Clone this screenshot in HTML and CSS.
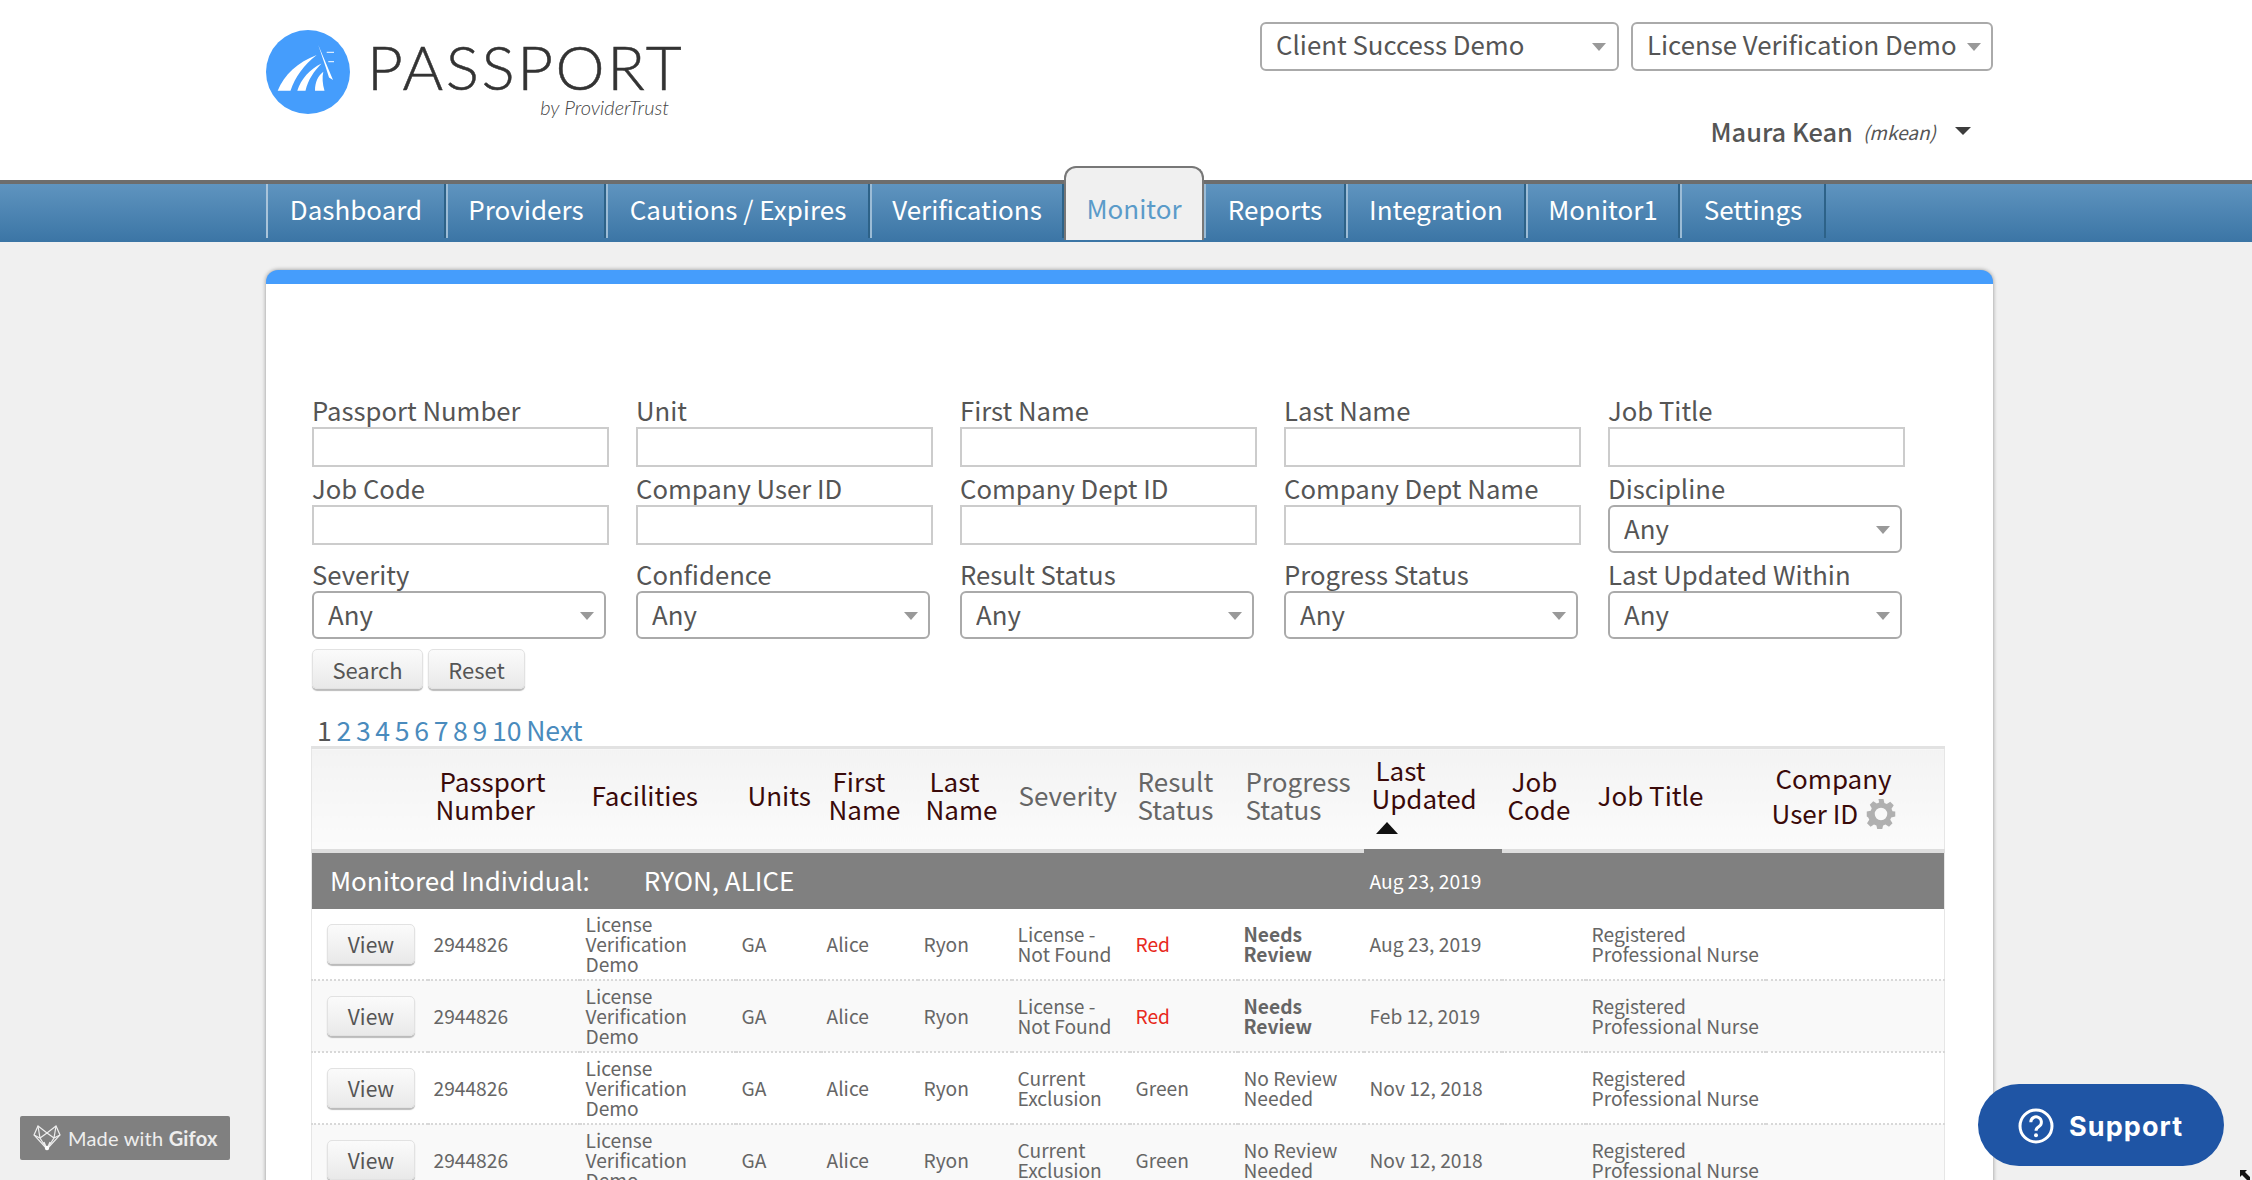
FILE: index.html
```html
<!DOCTYPE html>
<html lang="en">
<head>
    <meta charset="UTF-8">
    <title>Passport - Monitor</title>
    <link rel="stylesheet" href="styles.css">
</head>
<body>

<header class="top-header">
    <div class="logo">
        <svg class="logo-mark" viewBox="0 0 84 84" width="84" height="84">
            <circle cx="42" cy="42" r="42" fill="#459dfc"/>
            <path d="M11.7 60.7C18 45 32 32 50.7 25C38 35 29 47 24.5 60.7Z" fill="#fff"/>
            <path d="M31.3 60.7C35 49 44 39 55.5 33.5C48 41 42 50 39.5 60.7Z" fill="#fff"/>
            <path d="M49 60.7C49 52 52 46 57.3 41.7C56 47 56.5 54 58.5 60.7Z" fill="#fff"/>
            <path d="M52.3 15L67 50L63 47.5L60 38Z" fill="#fff"/>
            <path d="M60.7 22.3H68M62.3 31.7H68" stroke="#fff" stroke-width="1"/>
        </svg>
        <div class="logo-text">
            <span class="logo-name">PASSPORT</span>
            <span class="logo-sub">by ProviderTrust</span>
        </div>
    </div>
    <div class="header-right">
        <div class="org-selects">
            <div class="select org-select org-first"><select><option>Client Success Demo</option></select></div>
            <div class="select org-select org-second"><select><option>License Verification Demo</option></select></div>
        </div>
        <div class="user-menu">
            <span class="user-name">Maura Kean</span>
            <span class="user-login">(mkean)</span>
            <span class="user-caret"></span>
        </div>
    </div>
</header>

<nav class="main-nav">
    <a class="nav-item">Dashboard</a>
    <a class="nav-item">Providers</a>
    <a class="nav-item">Cautions / Expires</a>
    <a class="nav-item">Verifications</a>
    <a class="nav-item active">Monitor</a>
    <a class="nav-item">Reports</a>
    <a class="nav-item">Integration</a>
    <a class="nav-item">Monitor1</a>
    <a class="nav-item">Settings</a>
</nav>

<main class="panel">
    <form class="search-form">
        <div class="field"><label>Passport Number</label><input type="text"></div>
        <div class="field"><label>Unit</label><input type="text"></div>
        <div class="field"><label>First Name</label><input type="text"></div>
        <div class="field"><label>Last Name</label><input type="text"></div>
        <div class="field"><label>Job Title</label><input type="text"></div>

        <div class="field"><label>Job Code</label><input type="text"></div>
        <div class="field"><label>Company User ID</label><input type="text"></div>
        <div class="field"><label>Company Dept ID</label><input type="text"></div>
        <div class="field"><label>Company Dept Name</label><input type="text"></div>
        <div class="field"><label>Discipline</label><div class="select"><select><option>Any</option></select></div></div>

        <div class="field"><label>Severity</label><div class="select"><select><option>Any</option></select></div></div>
        <div class="field"><label>Confidence</label><div class="select"><select><option>Any</option></select></div></div>
        <div class="field"><label>Result Status</label><div class="select"><select><option>Any</option></select></div></div>
        <div class="field"><label>Progress Status</label><div class="select"><select><option>Any</option></select></div></div>
        <div class="field"><label>Last Updated Within</label><div class="select"><select><option>Any</option></select></div></div>
    </form>

    <div class="form-buttons">
        <button class="btn btn-search">Search</button>
        <button class="btn btn-reset">Reset</button>
    </div>

    <div class="pager">
        <span>1</span>
        <a>2</a> <a>3</a> <a>4</a> <a>5</a> <a>6</a> <a>7</a> <a>8</a> <a>9</a> <a>10</a> <a>Next</a>
    </div>

    <table class="results">
        <colgroup>
            <col class="c1"><col class="c2"><col class="c3"><col class="c4"><col class="c5"><col class="c6"><col class="c7">
            <col class="c8"><col class="c9"><col class="c10"><col class="c11"><col class="c12"><col class="c13">
        </colgroup>
        <thead>
            <tr>
                <th></th>
                <th><span class="first-line">Passport</span>Number</th>
                <th class="single">Facilities</th>
                <th class="single">Units</th>
                <th><span class="first-line">First</span>Name</th>
                <th><span class="first-line">Last</span>Name</th>
                <th class="plain tight">Severity</th>
                <th class="plain">Result<br>Status</th>
                <th class="plain">Progress<br>Status</th>
                <th class="sorted"><span class="first-line">Last</span>Updated<span class="sort-arrow"></span></th>
                <th class="job-code"><span class="first-line">Job</span>Code</th>
                <th class="single">Job Title</th>
                <th class="company"><span class="first-line">Company</span>User ID
                    <svg class="gear" viewBox="0 0 24 24" width="30" height="30">
                        <path fill="#b0b0b0" fill-rule="evenodd" d="M10 1h4l.7 3.2 1.9.8 2.8-1.8 2.8 2.8-1.8 2.8.8 1.9L23.4 11v4l-3.2.7-.8 1.9 1.8 2.8-2.8 2.8-2.8-1.8-1.9.8-.7 2.8h-4l-.7-2.8-1.9-.8-2.8 1.8-2.8-2.8 1.8-2.8-.8-1.9L.6 15v-4l3.2-.7.8-1.9L3 5.6 5.8 2.8l2.8 1.8 1.9-.8ZM12 8a5 5 0 1 0 0 10 5 5 0 0 0 0-10Z" transform="translate(0 -1)"/>
                    </svg>
                </th>
            </tr>
        </thead>
        <tbody>
            <tr class="group-row">
                <td colspan="9"><span class="group-label">Monitored Individual:</span><span class="group-name">RYON, ALICE</span></td>
                <td>Aug 23, 2019</td>
                <td colspan="3"></td>
            </tr>
            <tr>
                <td class="view-cell"><button class="btn btn-view">View</button></td>
                <td>2944826</td>
                <td>License Verification Demo</td>
                <td>GA</td>
                <td>Alice</td>
                <td>Ryon</td>
                <td>License - Not Found</td>
                <td class="red">Red</td>
                <td class="needs">Needs Review</td>
                <td>Aug 23, 2019</td>
                <td></td>
                <td class="job-title">Registered Professional Nurse</td>
                <td></td>
            </tr>
            <tr>
                <td class="view-cell"><button class="btn btn-view">View</button></td>
                <td>2944826</td>
                <td>License Verification Demo</td>
                <td>GA</td>
                <td>Alice</td>
                <td>Ryon</td>
                <td>License - Not Found</td>
                <td class="red">Red</td>
                <td class="needs">Needs Review</td>
                <td>Feb 12, 2019</td>
                <td></td>
                <td class="job-title">Registered Professional Nurse</td>
                <td></td>
            </tr>
            <tr>
                <td class="view-cell"><button class="btn btn-view">View</button></td>
                <td>2944826</td>
                <td>License Verification Demo</td>
                <td>GA</td>
                <td>Alice</td>
                <td>Ryon</td>
                <td>Current Exclusion</td>
                <td>Green</td>
                <td>No Review Needed</td>
                <td>Nov 12, 2018</td>
                <td></td>
                <td class="job-title">Registered Professional Nurse</td>
                <td></td>
            </tr>
            <tr>
                <td class="view-cell"><button class="btn btn-view">View</button></td>
                <td>2944826</td>
                <td>License Verification Demo</td>
                <td>GA</td>
                <td>Alice</td>
                <td>Ryon</td>
                <td>Current Exclusion</td>
                <td>Green</td>
                <td>No Review Needed</td>
                <td>Nov 12, 2018</td>
                <td></td>
                <td class="job-title">Registered Professional Nurse</td>
                <td></td>
            </tr>
        </tbody>
    </table>
</main>

<div class="gifox-badge">
    <svg viewBox="0 0 30 28" width="30" height="28" fill="none" stroke="#eee" stroke-width="1.2">
        <path d="M2 11L6 2L15 9L24 2L28 11L15 25Z"/>
        <path d="M6 2L8 14L15 25L22 14L24 2M2 11L8 14L15 9L22 14L28 11M12 18L15 25L18 18"/>
        <circle cx="15" cy="24" r="2.2" fill="#fff" stroke="none"/>
    </svg>
    <span>Made with <b>Gifox</b></span>
</div>

<a class="support-btn">
    <svg viewBox="0 0 36 36" width="36" height="36" fill="none">
        <circle cx="18" cy="18" r="16" stroke="#fff" stroke-width="3"/>
        <path d="M12.8 14.2a5.3 5.3 0 1 1 8.2 4.4c-1.9 1.2-3 2-3 4.2" stroke="#fff" stroke-width="3"/>
        <circle cx="18" cy="27.2" r="2" fill="#fff"/>
    </svg>
    <span>Support</span>
</a>

<svg class="cursor-mark" viewBox="0 0 12 10" width="12" height="10">
    <path d="M0 0H7L5 2L10 7V10H7L2 5L0 7Z" fill="#111"/>
</svg>

</body>
</html>
```

FILE: styles.css
```css
html, body {
    height: 1180px;
    overflow: hidden;
}

body {
    margin: 0;
    background-color: #f0f0f0;
    font-family: "Noto Sans CJK SC", "Noto Sans", sans-serif;
    color: #555;
}

.top-header {
    display: flex;
    justify-content: space-between;
    height: 180px;
    padding: 0 259px 0 266px;
    background-color: #fff;
}

.logo {
    display: flex;
    gap: 17px;
    padding-top: 30px;
    height: 84px;
}

.logo-text {
    display: flex;
    flex-direction: column;
    align-items: flex-end;
}

.logo-name {
    font-family: "Lato", sans-serif;
    font-weight: 300;
    font-size: 62px;
    line-height: 62px;
    letter-spacing: 2.6px;
    color: #333;
    margin-top: 5px;
    -webkit-text-stroke: 0.5px #333;
}

.logo-sub {
    font-family: "Lato", sans-serif;
    font-weight: 300;
    font-style: italic;
    font-size: 20px;
    line-height: 20px;
    color: #444;
    padding-right: 15px;
}

.header-right {
    display: flex;
    flex-direction: column;
    align-items: flex-end;
    padding-top: 22px;
}

.org-selects {
    display: flex;
    gap: 12px;
}

.select {
    position: relative;
    width: 294px;
    height: 48px;
}

.select::after {
    content: "";
    position: absolute;
    right: 12px;
    top: 21px;
    border-left: 7px solid transparent;
    border-right: 7px solid transparent;
    border-top: 8px solid #999;
}

.select select {
    appearance: none;
    width: 100%;
    height: 100%;
    padding: 0 0 4px 14px;
    border: 2px solid #aaa;
    border-radius: 6px;
    background-color: #fff;
    font-family: inherit;
    font-size: 25.8px;
    color: #555;
}

.org-select {
    height: 49px;
}

.org-select select {
    padding-bottom: 7px;
}

.org-first {
    width: 359px;
}

.org-first::after {
    right: 13px;
}

.org-second {
    width: 362px;
}

.user-menu {
    display: flex;
    align-items: center;
    height: 30px;
    margin-top: 45px;
    padding-right: 22px;
}

.user-name {
    font-size: 25.4px;
    font-weight: 500;
    color: #555;
}

.user-login {
    font-size: 19px;
    font-style: italic;
    margin-left: 10px;
}

.user-caret {
    margin-left: 19px;
    border-left: 8px solid transparent;
    border-right: 8px solid transparent;
    border-top: 8px solid #3d3d3d;
}

.main-nav {
    display: flex;
    box-sizing: border-box;
    height: 62px;
    padding: 0 0 4px 266px;
    border-top: 4px solid #6d6d6d;
    background: linear-gradient(#5f94bf, #3b75a5);
}

.nav-item {
    display: flex;
    align-items: center;
    justify-content: center;
    box-sizing: border-box;
    padding-bottom: 6px;
    border-left: 2px solid #9cbcd6;
    border-right: 2px solid #2d6288;
    font-size: 26px;
    color: #fff;
}

.nav-item:nth-child(1) { width: 180px; border-left-color: #a9c4da; }
.nav-item:nth-child(2) { width: 160px; }
.nav-item:nth-child(3) { width: 264px; }
.nav-item:nth-child(4) { width: 194px; }
.nav-item:nth-child(6) { width: 142px; }
.nav-item:nth-child(7) { width: 180px; }
.nav-item:nth-child(8) { width: 154px; }
.nav-item:nth-child(9) { width: 146px; }

.nav-item.active {
    width: 140px;
    height: 74px;
    margin-top: -18px;
    padding-bottom: 0;
    padding-top: 6px;
    border: 2px solid #777;
    border-bottom: none;
    border-radius: 12px 12px 0 0;
    background-color: #f0f0f0;
    color: #5b9bc9;
}

.panel {
    width: 1633px;
    margin: 28px 0 0 266px;
    padding: 114px 48px 0 46px;
    height: 900px;
    border-top: 14px solid #459dfc;
    border-radius: 12px 12px 0 0;
    background-color: #fff;
    box-shadow: 0 0 4px rgba(0, 0, 0, 0.4);
}

.search-form {
    display: grid;
    grid-template-columns: repeat(5, 324px);
    row-gap: 9px;
    align-items: start;
}

.field label {
    display: block;
    height: 29px;
    font-size: 25.7px;
    line-height: 23px;
    color: #555;
}

.field input {
    display: block;
    box-sizing: border-box;
    width: 297px;
    height: 40px;
    border: 2px solid #ccc;
    background-color: #fff;
}

.form-buttons {
    display: flex;
    gap: 5px;
    margin-top: 10px;
}

.btn {
    height: 40px;
    border: 1px solid #e2e2e2;
    border-radius: 5px;
    background: linear-gradient(#fbfbfb, #e9e9e9);
    box-shadow: 0 2px 1px #bbb;
    font-family: inherit;
    font-size: 22px;
    color: #555;
    padding: 0;
}

.btn-search {
    width: 111px;
}

.btn-reset {
    width: 97px;
}

.pager {
    margin-top: 26px;
    height: 30px;
    padding-left: 5px;
    font-size: 26.6px;
    line-height: 30px;
    word-spacing: -1.3px;
}

.pager a {
    color: #4a8bbd;
}

.results {
    table-layout: fixed;
    width: 1633px;
    border-collapse: collapse;
    margin: 1px 0 0 -1px;
    border-right: 1px solid #e6e6e6;
    border-left: 1px solid #e6e6e6;
}

.c1 { width: 116px; }
.c2 { width: 152px; }
.c3 { width: 156px; }
.c4 { width: 85px; }
.c5 { width: 97px; }
.c6 { width: 94px; }
.c7 { width: 118px; }
.c8 { width: 108px; }
.c9 { width: 126px; }
.c10 { width: 138px; }
.c11 { width: 84px; }
.c12 { width: 180px; }
.c13 { width: 179px; }

.results th {
    height: 91px;
    padding: 0 0 9px 8px;
    border-top: 3px solid #e2e2e2;
    border-bottom: 4px solid #dedede;
    background: linear-gradient(#f3f3f3, #fbfbfb);
    font-size: 26px;
    font-weight: 400;
    line-height: 28px;
    text-align: left;
    color: #3a0a0a;
}

.results th.single {
    padding-left: 12px;
}

.results th.plain {
    color: #666;
}

.results th.tight {
    padding-left: 7px;
}

.results th.job-code {
    padding-left: 6px;
}

.results th.sorted {
    border-bottom-color: #808080;
}

.results th.company {
    padding-left: 6px;
    line-height: 35px;
}

.first-line {
    display: block;
    margin-left: 4px;
}

.sort-arrow {
    display: block;
    width: 0;
    height: 0;
    margin: 10px 0 0 4px;
    border-left: 11px solid transparent;
    border-right: 11px solid transparent;
    border-bottom: 12px solid #111;
}

.gear {
    vertical-align: -5px;
    margin-left: 2px;
}

.results td {
    height: 70px;
    padding: 0 6px;
    border-bottom: 2px dotted #d8d8d8;
    font-size: 19.2px;
    line-height: 20px;
    color: #666;
}

.results td.job-title {
    padding-right: 0;
}

.results tbody tr:nth-child(odd):not(.group-row) td {
    background-color: #f9f9f9;
}

.results .group-row td {
    height: 56px;
    border-bottom: none;
    background-color: #808080;
    color: #fff;
}

.group-label {
    font-size: 26px;
    margin-left: 12px;
}

.group-name {
    font-size: 26px;
    margin-left: 54px;
}

.results td.view-cell {
    padding-left: 15px;
}

.btn-view {
    display: block;
    width: 88px;
    height: 40px;
    font-size: 21px;
}

.results td.red {
    color: #e8291c;
}

.results td.needs {
    font-weight: 700;
}

.gifox-badge {
    position: fixed;
    left: 20px;
    top: 1116px;
    display: flex;
    align-items: center;
    gap: 6px;
    box-sizing: border-box;
    width: 210px;
    height: 44px;
    padding-left: 12px;
    border-radius: 2px;
    background-color: #808080;
    font-family: "Lato", sans-serif;
    font-size: 20px;
    letter-spacing: 0.2px;
    color: #eee;
}

.support-btn {
    position: fixed;
    left: 1978px;
    top: 1084px;
    display: flex;
    align-items: center;
    gap: 15px;
    box-sizing: border-box;
    width: 246px;
    height: 82px;
    padding: 2px 0 0 40px;
    border-radius: 41px;
    background-color: #1f55a5;
    font-family: "Inter", sans-serif;
    font-size: 27px;
    font-weight: 700;
    letter-spacing: 1.1px;
    color: #fff;
}

.cursor-mark {
    position: fixed;
    left: 2240px;
    top: 1170px;
}
```
